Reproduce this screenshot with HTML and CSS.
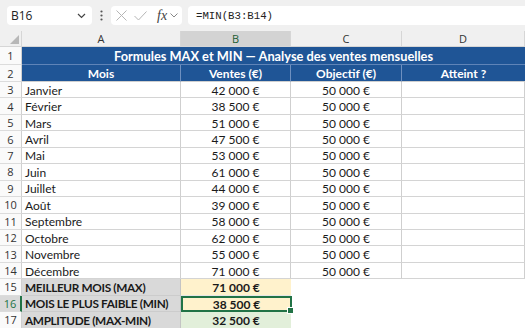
FILE: index.html
```html
<!DOCTYPE html>
<html>
<head>
<meta charset="utf-8">
<link rel="stylesheet" href="styles.css">
</head>
<body>
<div class="toolbar">
  <div class="namebox"><span>B16</span>
    <svg class="chev" width="9" height="6" viewBox="0 0 9 6"><path d="M1 1 L4.5 4.5 L8 1" fill="none" stroke="#444" stroke-width="1.2"/></svg>
  </div>
  <div class="dots"><svg width="3" height="11" viewBox="0 0 3 11"><circle cx="1.5" cy="1.5" r="1.1" fill="#555"/><circle cx="1.5" cy="5.5" r="1.1" fill="#555"/><circle cx="1.5" cy="9.5" r="1.1" fill="#555"/></svg></div>
  <div class="fxbox">
    <svg width="11" height="11" viewBox="0 0 11 11"><path d="M0.5 0.5 L10.5 10.5 M10.5 0.5 L0.5 10.5" stroke="#b5b5b5" stroke-width="1"/></svg>
    <svg width="13" height="10" viewBox="0 0 13 10"><path d="M0.5 5 L4.5 9 L12.5 0.5" fill="none" stroke="#b5b5b5" stroke-width="1"/></svg>
    <span class="fx">fx</span>
    <svg class="chev2" width="8" height="5" viewBox="0 0 8 5"><path d="M0.5 0.5 L4 4 L7.5 0.5" fill="none" stroke="#888" stroke-width="1"/></svg>
  </div>
  <div class="formula">=MIN(B3:B14)</div>
</div>
<div class="sheet">
  <div class="corner"><div class="tri"></div></div>
  <div class="colh">A</div>
  <div class="colh sel">B</div>
  <div class="colh">C</div>
  <div class="colh">D</div>

  <div class="rowh">1</div>
  <div class="title">Formules MAX et MIN — Analyse des ventes mensuelles</div>

  <div class="rowh">2</div>
  <div class="hd">Mois</div><div class="hd">Ventes (€)</div><div class="hd">Objectif (€)</div><div class="hd last">Atteint ?</div>

  <div class="rowh">3</div><div class="c l">Janvier</div><div class="c m">42 000 €</div><div class="c m">50 000 €</div><div class="c"></div>
  <div class="rowh">4</div><div class="c l">Février</div><div class="c m">38 500 €</div><div class="c m">50 000 €</div><div class="c"></div>
  <div class="rowh">5</div><div class="c l">Mars</div><div class="c m">51 000 €</div><div class="c m">50 000 €</div><div class="c"></div>
  <div class="rowh">6</div><div class="c l">Avril</div><div class="c m">47 500 €</div><div class="c m">50 000 €</div><div class="c"></div>
  <div class="rowh">7</div><div class="c l">Mai</div><div class="c m">53 000 €</div><div class="c m">50 000 €</div><div class="c"></div>
  <div class="rowh">8</div><div class="c l">Juin</div><div class="c m">61 000 €</div><div class="c m">50 000 €</div><div class="c"></div>
  <div class="rowh">9</div><div class="c l">Juillet</div><div class="c m">44 000 €</div><div class="c m">50 000 €</div><div class="c"></div>
  <div class="rowh">10</div><div class="c l">Août</div><div class="c m">39 000 €</div><div class="c m">50 000 €</div><div class="c"></div>
  <div class="rowh">11</div><div class="c l">Septembre</div><div class="c m">58 000 €</div><div class="c m">50 000 €</div><div class="c"></div>
  <div class="rowh">12</div><div class="c l">Octobre</div><div class="c m">62 000 €</div><div class="c m">50 000 €</div><div class="c"></div>
  <div class="rowh">13</div><div class="c l">Novembre</div><div class="c m">55 000 €</div><div class="c m">50 000 €</div><div class="c"></div>
  <div class="rowh">14</div><div class="c l">Décembre</div><div class="c m">71 000 €</div><div class="c m">50 000 €</div><div class="c"></div>

  <div class="rowh">15</div><div class="lab">MEILLEUR MOIS (MAX)</div><div class="val orange">71 000 €</div><div class="e"></div><div class="e"></div>
  <div class="rowh selrow">16</div><div class="lab">MOIS LE PLUS FAIBLE (MIN)</div><div class="val orange active">38 500 €<span class="handle"></span></div><div class="e"></div><div class="e"></div>
  <div class="rowh">17</div><div class="lab">AMPLITUDE (MAX-MIN)</div><div class="val green">32 500 €</div><div class="e"></div><div class="e"></div>
</div>
</body>
</html>
```
FILE: styles.css
```css
html, body {
  margin: 0;
  padding: 0;
  background: #ffffff;
  overflow: hidden;
  width: 525px;
  height: 328px;
}

.toolbar {
  height: 31px;
  background: #f0f0f0;
  display: flex;
  align-items: center;
  padding-left: 7px;
  box-sizing: border-box;
  font-family: "Open Sans", "Noto Sans", sans-serif;
}

.namebox {
  width: 85px;
  height: 19px;
  background: #fff;
  border-radius: 4px;
  display: flex;
  align-items: center;
  justify-content: space-between;
  padding: 0 6px 0 4px;
  box-sizing: border-box;
  font-size: 12px;
  color: #222;
}

.dots {
  width: 19px;
  display: flex;
  justify-content: center;
  align-items: center;
}

.fxbox {
  width: 71px;
  height: 19px;
  background: #fff;
  border-radius: 4px;
  display: flex;
  align-items: center;
  padding-left: 5px;
  gap: 7px;
  box-sizing: border-box;
}

.fx {
  font-family: "Liberation Serif", serif;
  font-style: italic;
  font-size: 14px;
  color: #444;
  margin-left: 3px;
  line-height: 1;
}

.chev2 { margin-left: -4px; }

.formula {
  margin-left: 6px;
  flex: 1;
  height: 19px;
  background: #fff;
  border-radius: 4px 0 0 4px;
  display: flex;
  align-items: center;
  padding-left: 8px;
  font-family: "Liberation Mono", "DejaVu Sans Mono", monospace;
  font-size: 10.7px;
  color: #222;
}

.sheet {
  display: grid;
  grid-template-columns: 22px 159px 110px 111px 123px;
  grid-template-rows: 16px 18px 17px repeat(15, 16.45px);
  font-family: Lato, "Liberation Sans", sans-serif;
  font-size: 12px;
  color: #1a1a1a;
}

.sheet > div {
  box-sizing: border-box;
  display: flex;
  align-items: center;
  white-space: nowrap;
  overflow: hidden;
}

.corner {
  background: #f0f0f0;
  border-right: 1px solid #d6d6d6;
  border-bottom: 1px solid #d6d6d6;
  position: relative;
}
.tri {
  position: absolute;
  right: 2px;
  bottom: 2px;
  width: 0;
  height: 0;
  border-left: 9px solid transparent;
  border-bottom: 9px solid #b8b8b8;
}

.colh {
  background: #f0f0f0;
  border-right: 1px solid #d6d6d6;
  border-bottom: 1px solid #d6d6d6;
  justify-content: center;
  font-family: "Open Sans", "Noto Sans", sans-serif;
  font-size: 11px;
  color: #333;
}
.colh.sel {
  background: #d3d3d3;
  color: #1e5e34;
}

.rowh {
  background: #fafafa;
  border-right: 1px solid #d0d0d0;
  border-bottom: 1px solid #dcdcdc;
  justify-content: center;
  font-family: "Open Sans", "Noto Sans", sans-serif;
  font-size: 11px;
  color: #333;
}
.rowh.selrow {
  background: #d9d9d9;
  color: #217346;
  border-right: 2px solid #217346;
}

.title {
  grid-column: 2 / 6;
  background: #1f5596;
  color: #fff;
  font-weight: 700;
  font-size: 12.8px;
  justify-content: center;
  border-bottom: 1px solid #5f84b8;
}

.hd {
  background: #1f5596;
  color: #fff;
  font-weight: 700;
  justify-content: center;
  border-right: 1px solid #6e90c0;
  border-bottom: 1px solid #cfcfcf;
}
.hd.last { border-right: none; }

.c {
  border-right: 1px solid #cfcfcf;
  border-bottom: 1px solid #d4d4d4;
  padding-top: 1px;
}
.c.l { padding-left: 3px; }
.c.m { justify-content: center; }

.lab {
  background: #d9d9d9;
  font-weight: 700;
  font-size: 11.8px;
  letter-spacing: -0.35px;
  padding-left: 3px;
  padding-top: 1px;
  border-bottom: 1px solid #cccccc;
  border-right: 1px solid #c4c4c4;
}

.val {
  font-weight: 700;
  justify-content: center;
  padding-top: 1px;
  border-bottom: 1px solid #e6e6e6;
}
.val.orange { background: #fff2cc; }
.val.green { background: #e2efda; }

.val.active {
  position: relative;
  overflow: visible !important;
  border: 2px solid #217346;
  margin-right: -1px;
}
.handle {
  position: absolute;
  right: -4px;
  bottom: -4px;
  width: 5px;
  height: 5px;
  background: #217346;
  border: 1px solid #fff;
}

.e { background: #fff; }
```
